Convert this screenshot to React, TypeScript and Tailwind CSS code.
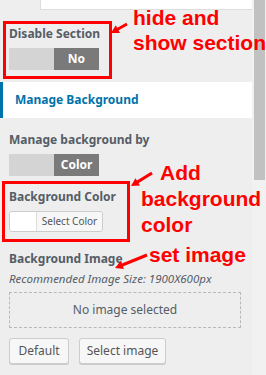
import React from "react";

const ui = "font-['Noto_Sans','Open_Sans',sans-serif]";
const note = "font-['Liberation_Sans',Arial,sans-serif]";

const Toggle: React.FC<{ label: string }> = ({ label }) => (
  <div className="flex w-[90px] h-[22px] mt-[5px]">
    <div className="flex-1 bg-[#d4d4d4]" />
    <div className="flex-1 bg-[#7a7a7a] flex items-center justify-center text-white text-[12px] font-bold">
      {label}
    </div>
  </div>
);

const Heading: React.FC<{ children: React.ReactNode }> = ({ children }) => (
  <div className="text-[12px] leading-[18px] font-bold text-[#555d66]">{children}</div>
);

const Arrow: React.FC<{ x1: number; y1: number; x2: number; y2: number }> = ({ x1, y1, x2, y2 }) => {
  const a = Math.atan2(y2 - y1, x2 - x1);
  const l = 9;
  const w = 0.5;
  const p1 = `${x2 - l * Math.cos(a - w)},${y2 - l * Math.sin(a - w)}`;
  const p2 = `${x2 - l * Math.cos(a + w)},${y2 - l * Math.sin(a + w)}`;
  return (
    <g>
      <line x1={x1} y1={y1} x2={x2 - 4 * Math.cos(a)} y2={y2 - 4 * Math.sin(a)} stroke="#ff0000" strokeWidth="3" />
      <polygon points={`${x2},${y2} ${p1} ${p2}`} fill="#ff0000" />
    </g>
  );
};

export default function App() {
  return (
    <div className={`relative w-[266px] h-[375px] overflow-hidden flex bg-[#f1f1f1] ${ui}`}>
      <div className="w-[252px] h-full bg-[#eeeeee] flex flex-col">
        <div className="ml-[40px] h-[10px] bg-white border-l border-b border-[#dddddd]" />

        <div className="px-[9px] pt-[15px]">
          <Heading>Disable Section</Heading>
          <Toggle label="No" />
        </div>

        <div className="mt-[12px] h-[36px] bg-white border-l-[3px] border-[#0073aa] flex items-center pl-[12px] text-[12px] font-bold text-[#0073aa]">
          Manage Background
        </div>

        <div className="px-[9px] pt-[13px]">
          <Heading>Manage background by</Heading>
          <Toggle label="Color" />
        </div>

        <div className="px-[9px] pt-[12px]">
          <Heading>Background Color</Heading>
          <div className="mt-[5px] flex w-[94px] h-[21px] border border-[#cccccc] rounded-[3px] overflow-hidden">
            <div className="w-[27px] bg-white border-r border-[#dddddd]" />
            <div className="flex-1 bg-[#f7f7f7] flex items-center justify-center text-[10px] text-[#555555]">
              Select Color
            </div>
          </div>
        </div>

        <div className="px-[9px] pt-[18px]">
          <Heading>Background Image</Heading>
          <div className="mt-[3px] text-[11.5px] leading-[16px] italic text-[#555d66] whitespace-nowrap">
            Recommended Image Size: 1900X600px
          </div>
          <div className="mt-[5px] w-[232px] h-[36px] border border-dashed border-[#b4b9be] flex items-center justify-center text-[12px] text-[#555d66]">
            No image selected
          </div>
          <div className="mt-[10px] flex gap-[10px]">
            <div className="w-[60px] h-[26px] bg-[#f7f7f7] border border-[#cccccc] rounded-[3px] shadow-[0_1px_0_#cccccc] flex items-center justify-center text-[12px] text-[#555555]">
              Default
            </div>
            <div className="w-[87px] h-[26px] bg-[#f7f7f7] border border-[#cccccc] rounded-[3px] shadow-[0_1px_0_#cccccc] flex items-center justify-center text-[12px] text-[#555555]">
              Select image
            </div>
          </div>
        </div>
      </div>

      <div className="w-[14px] h-full bg-[#f1f1f1] pl-[2px]">
        <div className="w-[11px] h-[180px] bg-[#c1c1c1]" />
      </div>

      {/* annotations */}
      <div className="absolute left-[3px] top-[21px] w-[109px] h-[58px] border-[3px] border-[#ff0000]" />
      <div className="absolute left-[2px] top-[181px] w-[128px] h-[61px] border-[3px] border-[#ff0000]" />

      <svg className="absolute inset-0 pointer-events-none" width="266" height="375">
        <Arrow x1={127} y1={24} x2={111} y2={33} />
        <Arrow x1={152} y1={173} x2={131} y2={186} />
        <Arrow x1={147} y1={255} x2={115} y2={268} />
      </svg>

      <div className={`absolute left-[133px] top-[5px] whitespace-nowrap text-[21px] leading-[25px] font-bold text-[#ff0000] ${note}`}>
        hide and
        <br />
        show section
      </div>
      <div className={`absolute left-[160px] top-[160px] whitespace-nowrap text-[21px] leading-[26px] font-bold text-[#ff0000] ${note}`}>
        Add
      </div>
      <div className={`absolute left-[141px] top-[186px] whitespace-nowrap text-[21px] leading-[26px] font-bold text-[#ff0000] ${note}`}>
        background
        <br />
        color
      </div>
      <div className={`absolute left-[149px] top-[242px] whitespace-nowrap text-[21px] leading-[26px] font-bold text-[#ff0000] ${note}`}>
        set image
      </div>
    </div>
  );
}
